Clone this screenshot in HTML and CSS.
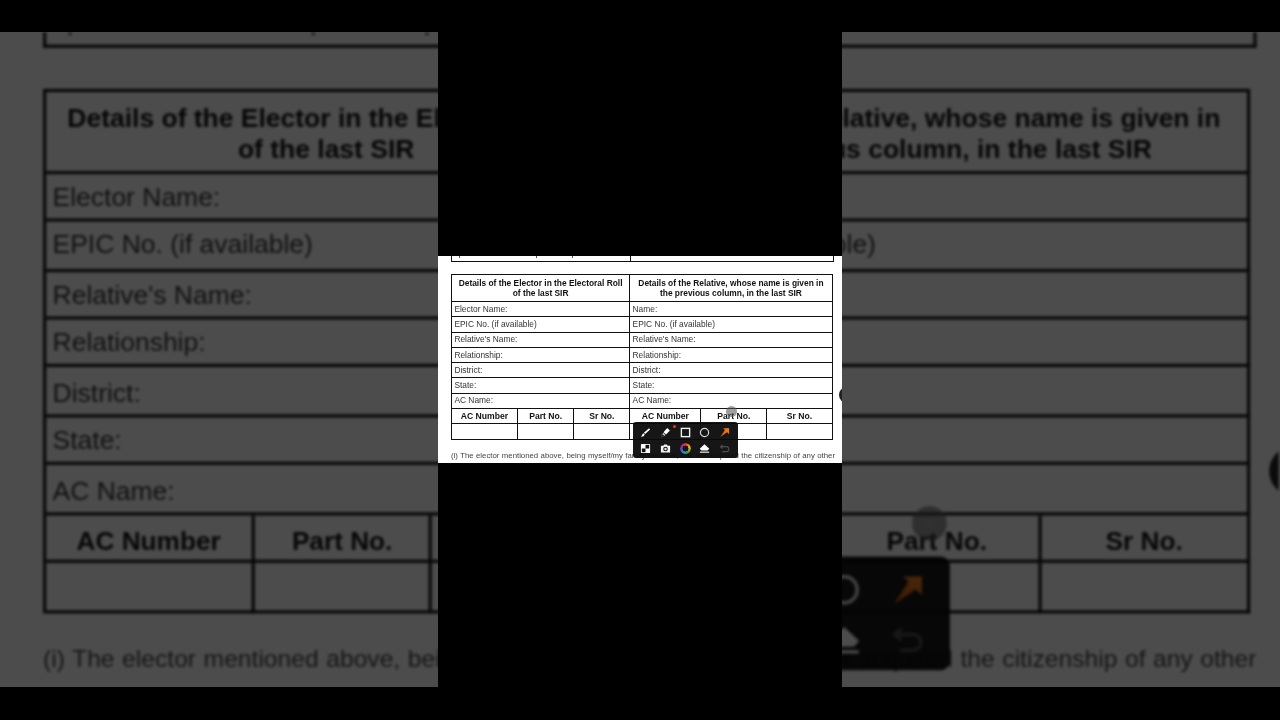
FILE: index.html
```html
<!DOCTYPE html>
<html lang="en">
<head>
<meta charset="utf-8">
<title>Details of the Elector</title>
<link rel="stylesheet" href="styles.css">
</head>
<body>
<svg class="sprite" aria-hidden="true">
  <defs>
    <linearGradient id="arrow-fill" x1="1" y1="0" x2="0" y2="1"><stop offset="0" stop-color="#f58220"/><stop offset="1" stop-color="#c9500f"/></linearGradient>
  </defs>
  <symbol id="i-pen" viewBox="0 0 12 12"><path d="M9.8 1.4 11 2.6 5.6 7.6 4.2 6.2Z" fill="#fff"/><path d="M3.7 6.8 5.1 8.2C4.6 10 2.6 10.9 1 10.6 2.2 9.8 2.2 7.8 3.7 6.8Z" fill="#fff"/></symbol>
  <symbol id="i-marker" viewBox="0 0 12 12"><path d="M7.8 1.2 10.8 3.8 6.6 8.2 3.8 5.6Z" fill="#fff"/><path d="M3.4 6.4 6 8.8 4.8 9.8 2.6 7.8Z" fill="#ccc"/><path d="M1.6 8 2.6 8.6 1.8 9.4ZM3 9.6 3.8 10.2 3 11ZM1 10.4 1.8 10.8 1 11.4Z" fill="#aaa"/></symbol>
  <symbol id="i-rect" viewBox="0 0 12 12"><rect x="1.5" y="1.5" width="9" height="9" fill="none" stroke="#f2f2f2" stroke-width="1.5"/></symbol>
  <symbol id="i-circle" viewBox="0 0 12 12"><circle cx="6" cy="6" r="4.5" fill="none" stroke="#d8d8d8" stroke-width="1.3"/></symbol>
  <symbol id="i-arrow" viewBox="0 0 12 12"><path d="M4.6 1.4H11V7.8L8.9 5.8 1.4 11 6.4 3.2Z" fill="url(#arrow-fill)"/></symbol>
  <symbol id="i-check" viewBox="0 0 12 12"><rect x="1" y="1" width="10" height="10" rx="1" fill="#fff"/><rect x="6" y="2" width="4" height="4" fill="#111"/><rect x="2" y="6" width="4" height="4" fill="#111"/></symbol>
  <symbol id="i-camera" viewBox="0 0 12 12"><path d="M1 3H3.6L4.6 1.6H7.4L8.4 3H11V10.4H1Z" fill="#f2f2f2"/><circle cx="6" cy="6.6" r="2.5" fill="#111"/><circle cx="6" cy="6.6" r="1.3" fill="#eee"/></symbol>
  <symbol id="i-eraser" viewBox="0 0 12 12"><path d="M6 1.4 11.2 6.2 9.4 8.2H2.6L.8 6.2Z" fill="#fff"/><path d="M1 9.4H11V10.6H1Z" fill="#fff"/></symbol>
  <symbol id="i-undo" viewBox="0 0 12 12"><path d="M4 2 1.6 4 4 6M1.8 4H8A2.6 2.6 0 0 1 8 9.4H3.4" fill="none" stroke="#4c4c4c" stroke-width="1.3"/></symbol>
</svg>

<main class="stage">
  <div class="backdrop" aria-hidden="true">
    <div class="frame frame-large">
      <div class="prev-table">
        <div class="prev-cell prev-left"><i class="tick"></i><i class="tick"></i><i class="tick"></i></div>
        <div class="prev-cell"></div>
      </div>
      <div class="form">
        <div class="cell head half">Details of the Elector in the Electoral Roll of the last SIR</div>
        <div class="cell head half">Details of the Relative, whose name is given in the previous column, in the last SIR</div>
        <div class="cell half">Elector Name:</div><div class="cell half">Name:</div>
        <div class="cell half">EPIC No. (if available)</div><div class="cell half">EPIC No. (if available)</div>
        <div class="cell half">Relative's Name:</div><div class="cell half">Relative's Name:</div>
        <div class="cell half">Relationship:</div><div class="cell half">Relationship:</div>
        <div class="cell half">District:</div><div class="cell half">District:</div>
        <div class="cell half">State:</div><div class="cell half">State:</div>
        <div class="cell half">AC Name:</div><div class="cell half">AC Name:</div>
        <div class="cell sub">AC Number</div><div class="cell sub">Part No.</div><div class="cell sub">Sr No.</div>
        <div class="cell sub">AC Number</div><div class="cell sub">Part No.</div><div class="cell sub">Sr No.</div>
        <div class="cell blank"></div><div class="cell blank"></div><div class="cell blank"></div>
        <div class="cell blank"></div><div class="cell blank"></div><div class="cell blank"></div>
      </div>
      <p class="note">(i) The elector mentioned above, being myself/my family member, has not acquired the citizenship of any other</p>
      <div class="edge-dot"></div>
      <div class="toolbar">
        <span class="close">×</span><span class="badge"></span>
        <svg class="tool"><use href="#i-pen"/></svg><svg class="tool"><use href="#i-marker"/></svg><svg class="tool"><use href="#i-rect"/></svg><svg class="tool"><use href="#i-circle"/></svg><svg class="tool"><use href="#i-arrow"/></svg>
        <svg class="tool"><use href="#i-check"/></svg><svg class="tool"><use href="#i-camera"/></svg><span class="ring"></span><svg class="tool"><use href="#i-eraser"/></svg><svg class="tool"><use href="#i-undo"/></svg>
      </div>
    </div>
  </div>

  <div class="column">
    <div class="frame frame-main">
      <div class="prev-table">
        <div class="prev-cell prev-left"><i class="tick"></i><i class="tick"></i><i class="tick"></i></div>
        <div class="prev-cell"></div>
      </div>
      <div class="form">
        <div class="cell head half">Details of the Elector in the Electoral Roll of the last SIR</div>
        <div class="cell head half">Details of the Relative, whose name is given in the previous column, in the last SIR</div>
        <div class="cell half">Elector Name:</div><div class="cell half">Name:</div>
        <div class="cell half">EPIC No. (if available)</div><div class="cell half">EPIC No. (if available)</div>
        <div class="cell half">Relative's Name:</div><div class="cell half">Relative's Name:</div>
        <div class="cell half">Relationship:</div><div class="cell half">Relationship:</div>
        <div class="cell half">District:</div><div class="cell half">District:</div>
        <div class="cell half">State:</div><div class="cell half">State:</div>
        <div class="cell half">AC Name:</div><div class="cell half">AC Name:</div>
        <div class="cell sub">AC Number</div><div class="cell sub">Part No.</div><div class="cell sub">Sr No.</div>
        <div class="cell sub">AC Number</div><div class="cell sub">Part No.</div><div class="cell sub">Sr No.</div>
        <div class="cell blank"></div><div class="cell blank"></div><div class="cell blank"></div>
        <div class="cell blank"></div><div class="cell blank"></div><div class="cell blank"></div>
      </div>
      <p class="note">(i) The elector mentioned above, being myself/my family member, has not acquired the citizenship of any other</p>
      <div class="edge-dot"></div>
      <div class="toolbar">
        <span class="close">×</span><span class="badge"></span>
        <svg class="tool"><use href="#i-pen"/></svg><svg class="tool"><use href="#i-marker"/></svg><svg class="tool"><use href="#i-rect"/></svg><svg class="tool"><use href="#i-circle"/></svg><svg class="tool"><use href="#i-arrow"/></svg>
        <svg class="tool"><use href="#i-check"/></svg><svg class="tool"><use href="#i-camera"/></svg><span class="ring"></span><svg class="tool"><use href="#i-eraser"/></svg><svg class="tool"><use href="#i-undo"/></svg>
      </div>
    </div>
  </div>
</main>
</body>
</html>
```

FILE: styles.css
```css
* { box-sizing: border-box; }
html, body { margin: 0; padding: 0; background: #000; }
.sprite { position: absolute; width: 0; height: 0; }

.stage {
  position: relative;
  width: 1280px;
  height: 720px;
  overflow: hidden;
  background: #000;
  font-family: "Liberation Sans", Arial, sans-serif;
}

/* dimmed, enlarged copy of the video behind the column */
.backdrop {
  position: absolute;
  left: 0;
  top: 32px;
  width: 1280px;
  height: 655px;
  overflow: hidden;
  background: #fff;
  filter: brightness(0.3);
}
.frame-large {
  transform-origin: 0 0;
  transform: translateX(2px) scale(3.16);
  filter: blur(0.55px);
}
.frame-large .form { grid-template-rows: 25.6px repeat(9, 15.47px); margin-top: 13px; }
.frame-large .prev-table { height: 5px; width: 383.7px; }
.frame-large .prev-cell { height: 4px; }
.frame-large .tick { height: 1px; }
.frame-large .cell { padding-left: 2px; padding-bottom: 0; }
.frame-large .head { padding: 1px 4px 0; }
.frame-large .sub { padding: 1px 0 0; font-size: 8.3px; }
.frame-large .note { margin-top: 10.5px; }

.column {
  position: relative;
  width: 404px;
  height: 720px;
  margin: 0 auto;
  padding-top: 256px;
  background: #000;
}

.frame {
  position: relative;
  width: 404px;
  height: 207px;
  padding-left: 13px;
  overflow: hidden;
  background: #fff;
  color: #333;
}
.frame-main .form,
.frame-main .note,
.frame-main .prev-table { filter: blur(0.35px); }

.prev-table {
  display: grid;
  grid-template-columns: 178.7px 204px;
  width: 383px;
  height: 6px;
  border: 1px solid #111;
  border-top: 0;
}
.prev-cell {
  display: flex;
  height: 5px;
}
.prev-left {
  gap: 76px;
  padding-left: 7px;
  border-right: 1px solid #111;
}
.prev-left .tick:last-child { margin-left: -41px; }
.tick {
  width: 1px;
  height: 1.5px;
  background: #555;
}

.form {
  display: grid;
  grid-template-columns: 65.8px 56.7px 55.7px 71.3px 65.7px 65.6px;
  grid-template-rows: 27px repeat(9, 15.3px);
  width: 381.8px;
  margin-top: 12px;
  border-top: 1px solid #111;
  border-left: 1px solid #111;
}
.cell {
  display: flex;
  align-items: center;
  padding: 0 0 1px 2.4px;
  font-size: 8.4px;
  line-height: 10px;
  border-right: 1px solid #111;
  border-bottom: 1px solid #111;
  white-space: nowrap;
}
.half { grid-column: span 3; }
.head {
  justify-content: center;
  padding: 0 4px;
  font-weight: 700;
  color: #111;
  text-align: center;
  white-space: normal;
}
.sub {
  justify-content: center;
  padding-left: 0;
  font-size: 8.6px;
  font-weight: 700;
  color: #111;
}

.note {
  margin: 11px 0 0;
  width: 384px;
  font-size: 7.8px;
  line-height: 10px;
  text-align: justify;
  text-align-last: justify;
  white-space: normal;
  color: #444;
}

.edge-dot {
  position: absolute;
  left: 401px;
  top: 131px;
  width: 16px;
  height: 16px;
  border-radius: 50%;
  background: #222;
}

.toolbar {
  position: absolute;
  left: 195px;
  top: 166px;
  display: grid;
  grid-template-columns: repeat(5, 19.7px);
  grid-template-rows: 16px 16px;
  place-items: center;
  width: 105px;
  height: 36px;
  padding: 2px 3px;
  border-radius: 3px;
  background: rgba(10, 10, 10, 0.95);
}
.tool { width: 11px; height: 11px; }
.ring {
  width: 11px;
  height: 11px;
  border-radius: 50%;
  background: conic-gradient(#e53935, #f9a825, #43a047, #1e88e5, #8e24aa, #e53935);
  -webkit-mask: radial-gradient(circle, transparent 2.8px, #000 3.2px);
  mask: radial-gradient(circle, transparent 2.8px, #000 3.2px);
}
.close {
  position: absolute;
  right: 1px;
  top: -16px;
  width: 11px;
  height: 11px;
  border-radius: 50%;
  background: rgba(90, 90, 90, 0.6);
  color: #aaa;
  font-size: 7px;
  line-height: 11px;
  text-align: center;
}
.badge {
  position: absolute;
  left: 40px;
  top: 2.5px;
  width: 3px;
  height: 3px;
  border-radius: 50%;
  background: #e53935;
}
```
